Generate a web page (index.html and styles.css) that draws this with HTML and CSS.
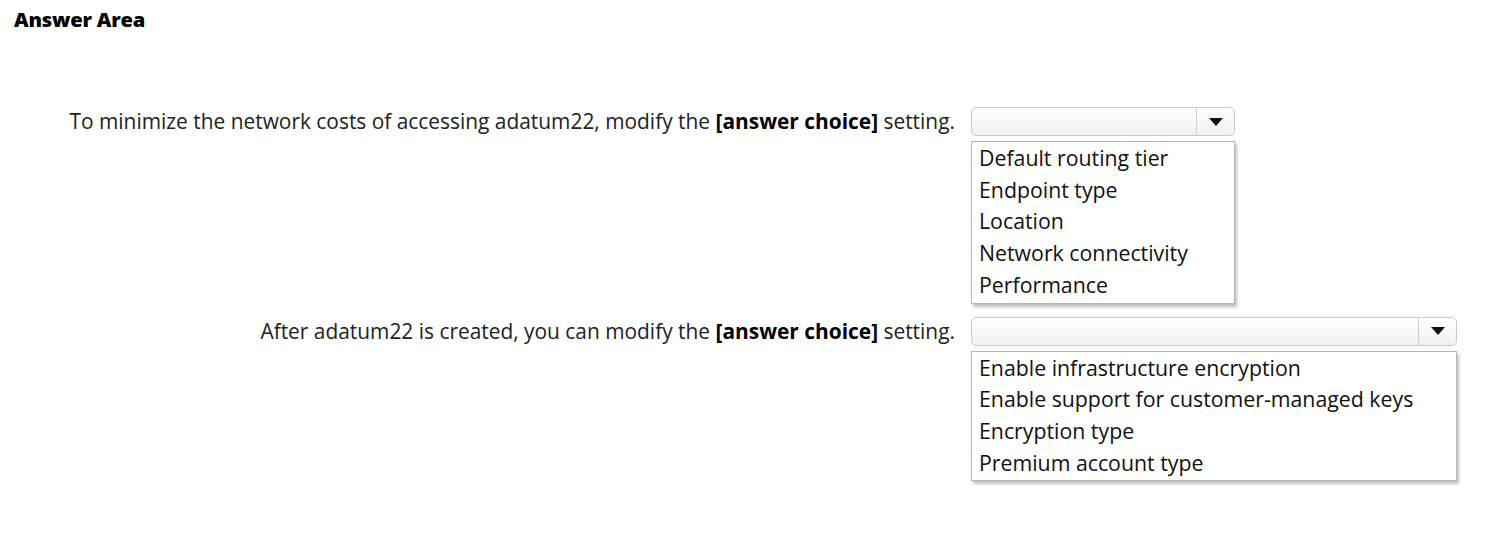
FILE: index.html
```html
<!DOCTYPE html>
<html>
<head>
<meta charset="utf-8">
<link rel="stylesheet" href="styles.css">
</head>
<body>
<h1 class="title">Answer Area</h1>
<div class="qa">
  <div class="label">To minimize the network costs of accessing adatum22, modify the <b>[answer choice]</b> setting.</div>
  <div class="field">
    <div class="select w1"><span class="select-arrow"></span></div>
    <ul class="options w1">
      <li>Default routing tier</li>
      <li>Endpoint type</li>
      <li>Location</li>
      <li>Network connectivity</li>
      <li>Performance</li>
    </ul>
  </div>
  <div class="label">After adatum22 is created, you can modify the <b>[answer choice]</b> setting.</div>
  <div class="field">
    <div class="select w2"><span class="select-arrow"></span></div>
    <ul class="options w2">
      <li>Enable infrastructure encryption</li>
      <li>Enable support for customer-managed keys</li>
      <li>Encryption type</li>
      <li>Premium account type</li>
    </ul>
  </div>
</div>
</body>
</html>
```
FILE: styles.css
```css
html, body {
  margin: 0;
  padding: 0;
  background: #ffffff;
}
body {
  font-family: "Open Sans", "Noto Sans", sans-serif;
  color: #1a1a1a;
  padding: 8px 14px;
}
.title {
  margin: 0;
  font-size: 20.2px;
  font-weight: 800;
  line-height: 22px;
  color: #000;
  letter-spacing: -0.2px;
}
.qa {
  display: grid;
  grid-template-columns: 941px auto;
  column-gap: 16px;
  row-gap: 13px;
  margin-top: 77px;
  align-items: start;
}
.label {
  text-align: right;
  font-size: 20.9px;
  line-height: 28px;
  height: 28px;
  white-space: nowrap;
  color: #222;
}
.label b {
  font-weight: 700;
  color: #000;
}
.field {
  display: flex;
  flex-direction: column;
  gap: 5px;
}
.w1 { width: 264px; }
.w2 { width: 486px; }
.select {
  box-sizing: border-box;
  height: 29px;
  border: 1px solid #c9c9c9;
  border-radius: 5px;
  background: linear-gradient(#ffffff, #f1f1f1);
  display: flex;
  justify-content: flex-end;
}
.select-arrow {
  width: 37px;
  border-left: 1px solid #cfcfcf;
  display: flex;
  align-items: center;
  justify-content: center;
}
.select-arrow::before {
  content: "";
  border-left: 7px solid transparent;
  border-right: 7px solid transparent;
  border-top: 8px solid #111;
}
.options {
  box-sizing: border-box;
  list-style: none;
  margin: 0;
  padding: 0 6px 2px 7px;
  border: 1px solid #b5b5b5;
  background: #fff;
  box-shadow: 2px 3px 3px rgba(0,0,0,0.25);
}
.options li {
  font-size: 21.3px;
  line-height: 31.7px;
  color: #111;
  white-space: nowrap;
}
```
